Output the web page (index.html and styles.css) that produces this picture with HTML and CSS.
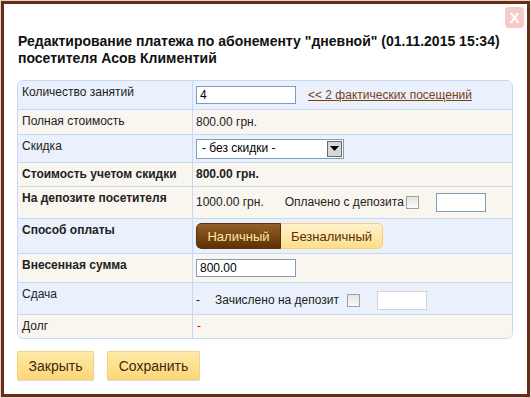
FILE: index.html
```html
<!DOCTYPE html>
<html>
<head>
<meta charset="utf-8">
<link rel="stylesheet" href="styles.css">
</head>
<body>
<div class="dialog">
  <span class="close">X</span>
  <h1 class="title">Редактирование платежа по абонементу "дневной" (01.11.2015 15:34) посетителя Асов Климентий</h1>
  <div class="grid">
    <div class="row blue h28">
      <div class="label">Количество занятий</div>
      <div class="value"><span class="input w100">4</span><a class="link" href="#">&lt;&lt; 2 фактических посещений</a></div>
    </div>
    <div class="row beige h24">
      <div class="label">Полная стоимость</div>
      <div class="value">800.00 грн.</div>
    </div>
    <div class="row blue h27">
      <div class="label">Скидка</div>
      <div class="value"><span class="select">- без скидки -<span class="arrow"><svg width="9" height="5" viewBox="0 0 9 5"><path d="M0 0H9L4.5 5Z" fill="#000"/></svg></span></span></div>
    </div>
    <div class="row beige h23">
      <div class="label bold">Стоимость учетом скидки</div>
      <div class="value bold">800.00 грн.</div>
    </div>
    <div class="row beige h31">
      <div class="label bold">На депозите посетителя</div>
      <div class="value"><span>1000.00 грн.</span><span class="paid">Оплачено с депозита</span><span class="check"></span><span class="input w50 ml17"></span></div>
    </div>
    <div class="row blue h34">
      <div class="label bold">Способ оплаты</div>
      <div class="value"><span class="seg">
        <span class="seg-btn active">Наличный</span><span class="seg-btn">Безналичный</span>
      </span></div>
    </div>
    <div class="row beige h28">
      <div class="label bold">Внесенная сумма</div>
      <div class="value"><span class="input w100">800.00</span></div>
    </div>
    <div class="row blue h31">
      <div class="label">Сдача</div>
      <div class="value shift"><span>-</span><span class="credited">Зачислено на депозит</span><span class="check ml8"></span><span class="input disabled w50 ml17"></span></div>
    </div>
    <div class="row beige h23 last">
      <div class="label">Долг</div>
      <div class="value"><span class="debt">-</span></div>
    </div>
  </div>
  <div class="actions">
    <button class="btn w77">Закрыть</button>
    <button class="btn w93">Сохранить</button>
  </div>
</div>
</body>
</html>
```
FILE: styles.css
```css
html, body {
  margin: 0;
  padding: 0;
}
body {
  background: #d9d9d9;
  font-family: "Liberation Sans", Arial, sans-serif;
  font-size: 12px;
  color: #222;
}
.dialog {
  position: relative;
  box-sizing: border-box;
  margin: 1px 0 0 1px;
  width: 529px;
  height: 396px;
  border: 3px solid #6d2c11;
  background: #fff;
  padding: 29px 0 0 13px;
}
.close {
  position: absolute;
  left: 501px;
  top: 3px;
  width: 19px;
  height: 21px;
  border-radius: 4px;
  background: #f8c9c9;
  color: #fff;
  font-weight: bold;
  font-size: 15px;
  line-height: 21px;
  text-align: center;
}
.title {
  margin: 0 0 13px 1px;
  font-size: 14px;
  line-height: 17px;
  font-weight: bold;
  color: #111;
  width: 500px;
}
.grid {
  width: 496px;
  box-sizing: border-box;
  border: 1px solid #c6d9f4;
  border-radius: 6px;
  overflow: hidden;
}
.row {
  display: grid;
  grid-template-columns: 175px 1fr;
  border-bottom: 1px solid #c6d9f4;
}
.row.last { border-bottom: none; }
.blue { background: #eaf1fd; }
.beige { background: #f9f5ef; }
.h23 { height: 23px; }
.h24 { height: 24px; }
.h27 { height: 27px; }
.h28 { height: 28px; }
.h31 { height: 31px; }
.h34 { height: 34px; }
.label {
  border-right: 1px solid #c6d9f4;
  padding: 4px 0 0 4px;
  line-height: 15px;
}
.bold { font-weight: bold; }
.value {
  display: flex;
  align-items: center;
  padding-left: 3px;
  line-height: 15px;
}
.value.shift { padding-top: 3px; }
.debt {
  color: #e00000;
  padding-left: 1px;
}
.input {
  box-sizing: border-box;
  display: inline-block;
  height: 18px;
  border: 1px solid #7f9db9;
  background: #fff;
  padding: 0 3px;
  line-height: 16px;
  font-size: 12px;
  color: #000;
}
.input.disabled {
  border-color: #d4d4d4;
}
.w100 { width: 100px; }
.w50 { width: 50px; height: 19px; }
.ml17 { margin-left: 17px; }
.link {
  margin-left: 12px;
  color: #7a3f12;
  text-decoration: underline;
}
.select {
  box-sizing: border-box;
  display: inline-flex;
  align-items: center;
  justify-content: space-between;
  width: 148px;
  height: 20px;
  border: 1px solid #7f9db9;
  background: #fff;
  padding: 0 1px 0 5px;
  color: #000;
}
.arrow {
  box-sizing: border-box;
  width: 15px;
  height: 16px;
  border: 1px solid #6a6a6a;
  background: #d8d8d8;
  display: flex;
  align-items: center;
  justify-content: center;
}
.paid { margin-left: 21px; }
.credited { margin-left: 15px; }
.check {
  box-sizing: border-box;
  display: inline-block;
  width: 13px;
  height: 13px;
  border: 1px solid #a0a0a0;
  background: linear-gradient(#e4e4e4, #fafafa);
  margin-left: 2px;
}
.check.ml8 { margin-left: 8px; }
.seg {
  display: inline-flex;
  height: 26px;
  border-radius: 5px;
  overflow: hidden;
}
.seg-btn {
  box-sizing: border-box;
  display: flex;
  align-items: center;
  justify-content: center;
  height: 26px;
  width: 102px;
  font-size: 13px;
  color: #5a2d0c;
  background: linear-gradient(#fff3cc, #fddf8a);
  border: 1px solid #f2cd74;
  border-left: none;
  border-radius: 0 5px 5px 0;
}
.seg-btn.active {
  width: 85px;
  color: #ffe7a6;
  background: linear-gradient(#936028, #5e3005);
  border: 1px solid #5a2f08;
  border-radius: 5px 0 0 5px;
}
.actions {
  display: flex;
  gap: 13px;
  margin-top: 12px;
}
.btn {
  box-sizing: border-box;
  height: 29px;
  font-family: "Liberation Sans", Arial, sans-serif;
  font-size: 14px;
  color: #3a2a1a;
  background: linear-gradient(#ffeaa8, #fdd775);
  border: 1px solid #f3d486;
  border-radius: 1px;
  box-shadow: 0 1px 1px rgba(0,0,0,0.15);
  padding: 0;
}
.w77 { width: 77px; }
.w93 { width: 93px; }
```
